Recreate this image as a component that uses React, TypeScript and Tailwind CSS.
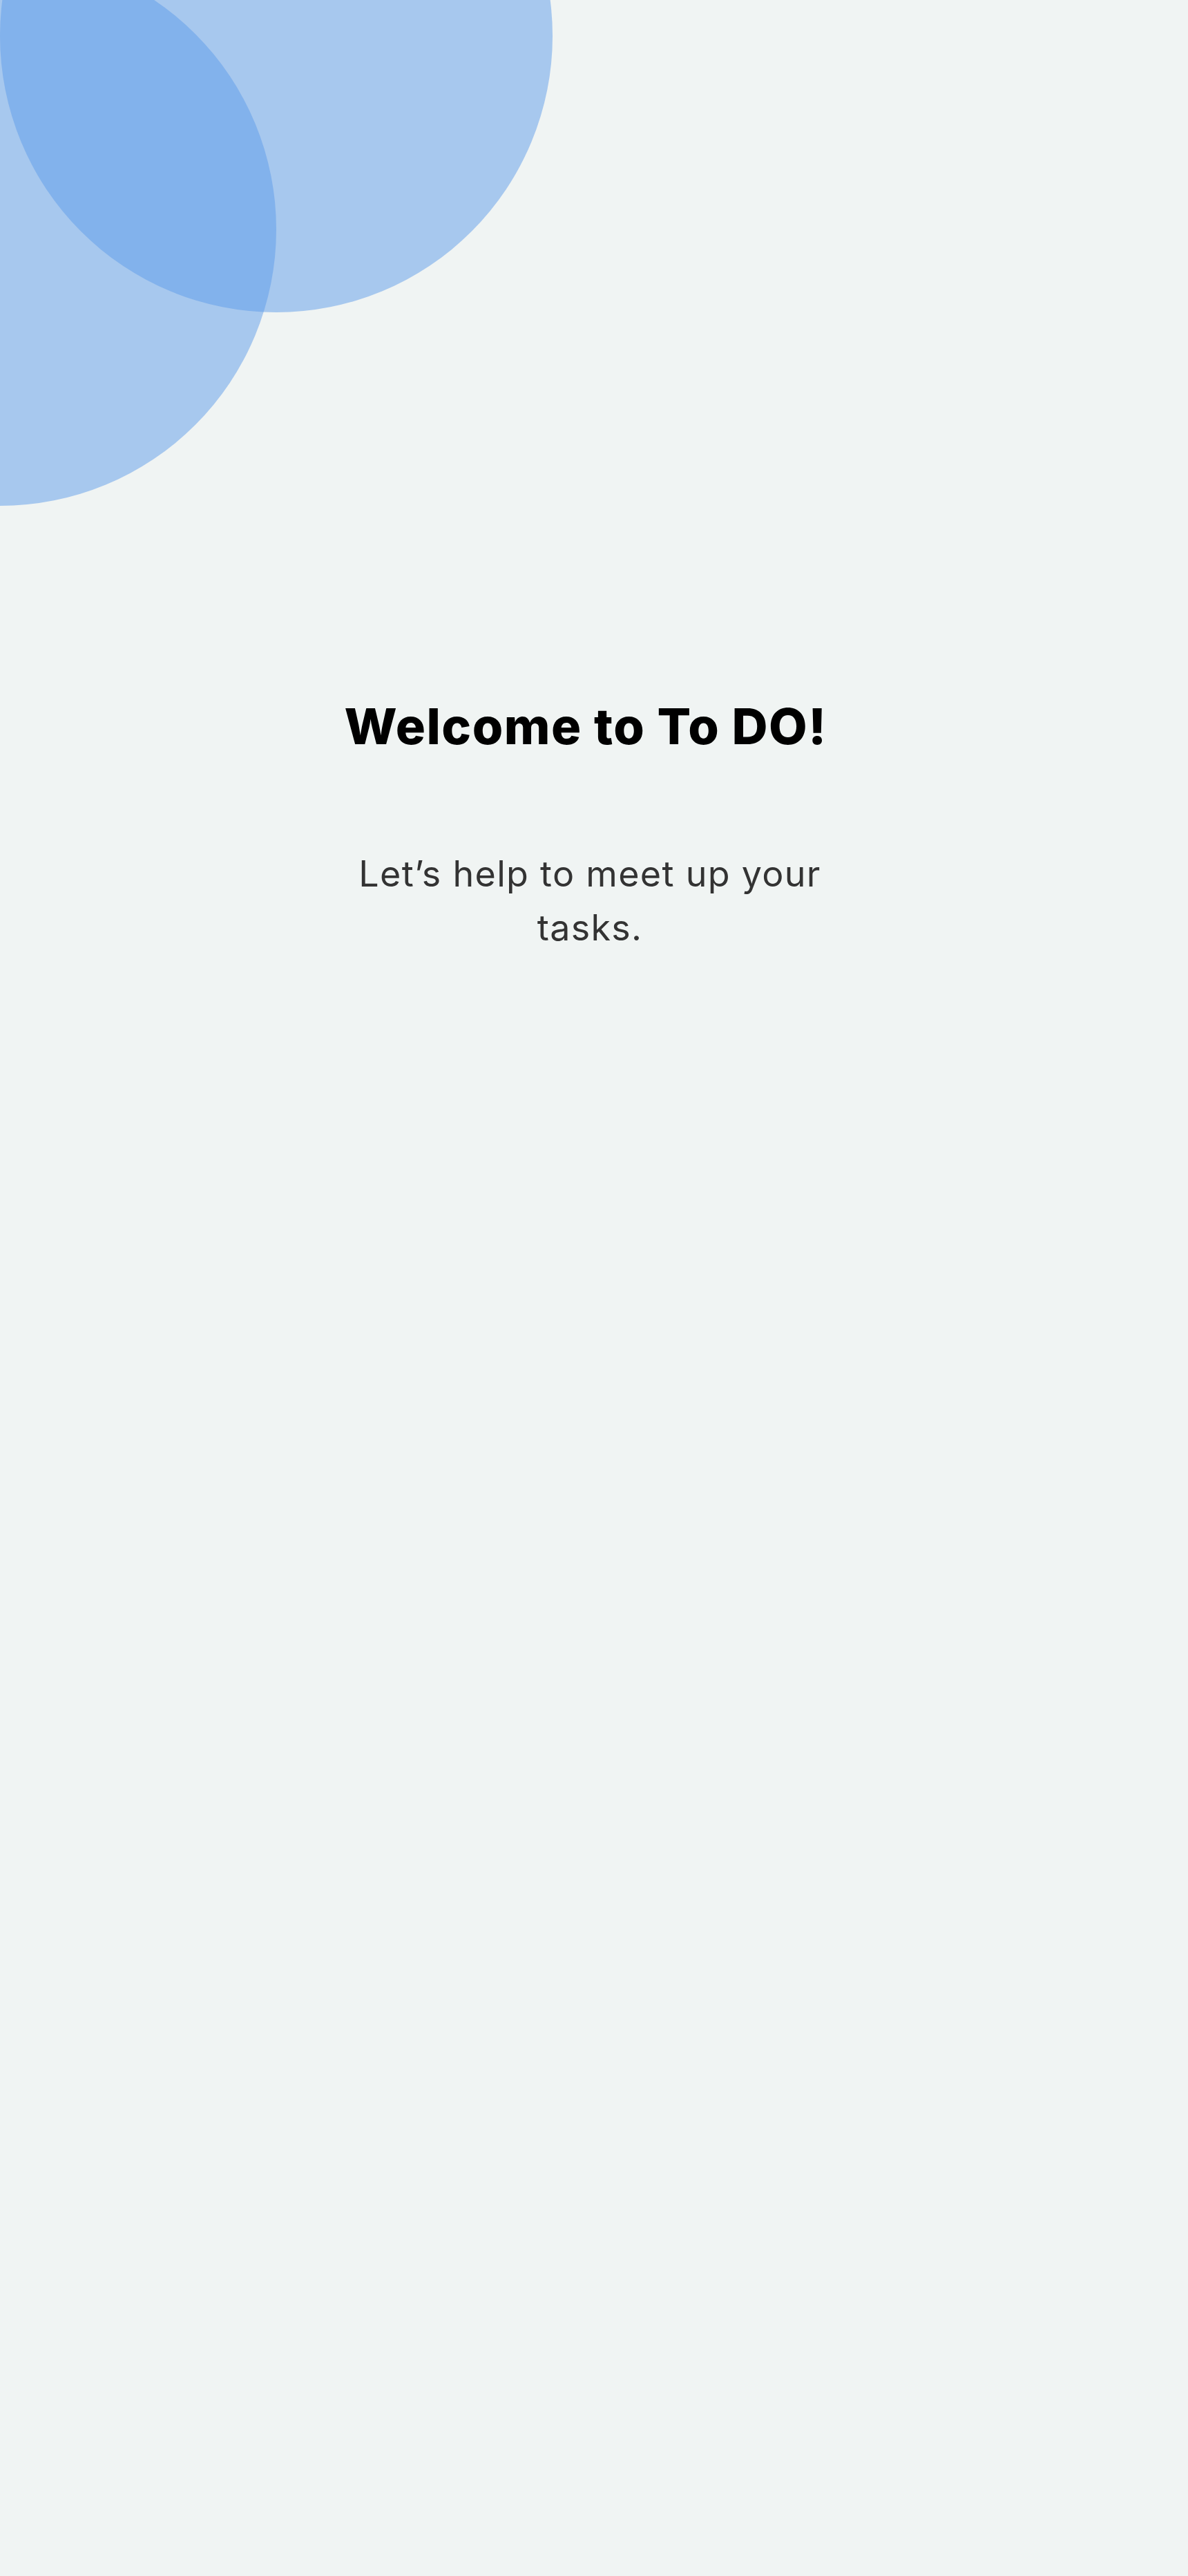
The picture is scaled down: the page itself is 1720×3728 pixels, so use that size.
export default function App() {
  return (
    <div className="relative min-h-[3728px] w-full overflow-hidden bg-[#f0f4f3]" style={{ fontFamily: "Inter, 'Noto Sans', sans-serif" }}>
      <div className="absolute left-[-400px] top-[-68px] h-[800px] w-[800px] rounded-full bg-[#5e9ce9]/50" />
      <div className="absolute left-0 top-[-348px] h-[800px] w-[800px] rounded-full bg-[#5e9ce9]/50" />
      <main className="relative flex flex-col items-center pt-[1015px]">
        <h1 className="mr-[24px] text-[72px] leading-none font-extrabold tracking-[1.5px] text-black">
          Welcome to To DO!
        </h1>
        <p className="mt-[139px] mr-[12px] w-[720px] text-center text-[52px] leading-[78px] font-normal tracking-[1.3px] text-[#333333]">
          Let’s help to meet up your tasks.
        </p>
      </main>
    </div>
  );
}
